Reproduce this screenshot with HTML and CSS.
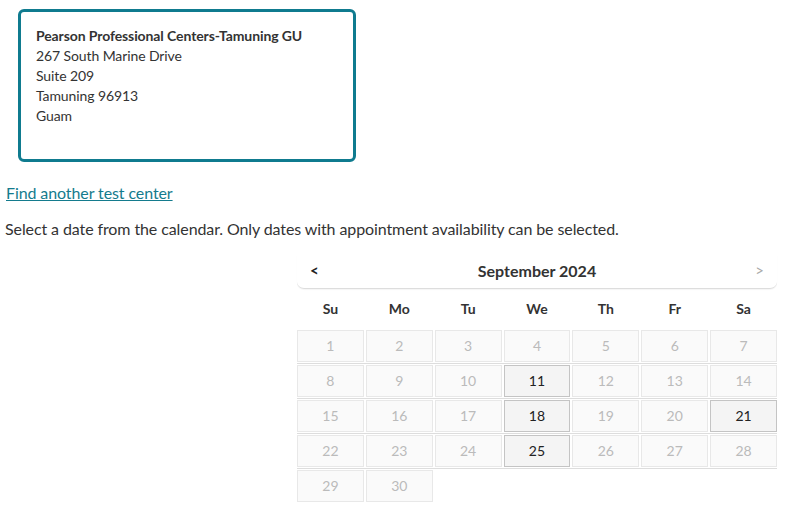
FILE: index.html
```html
<html>
    <head>
        <link rel="stylesheet" href="styles.css">
    </head>
    <body>
        <div class="center-card">
            <div class="center-name">Pearson Professional Centers-Tamuning GU</div>
            <div>267 South Marine Drive</div>
            <div>Suite 209</div>
            <div>Tamuning 96913</div>
            <div>Guam</div>
        </div>
        <a class="find-link" href="#">Find another test center</a>
        <p class="hint">Select a date from the calendar. Only dates with appointment availability can be selected.</p>
        <div class="calendar">
            <div class="cal-header">
                <span class="nav prev">&lt;</span>
                <span class="month">September 2024</span>
                <span class="nav next">&gt;</span>
            </div>
            <div class="weekdays">
                <div>Su</div><div>Mo</div><div>Tu</div><div>We</div><div>Th</div><div>Fr</div><div>Sa</div>
            </div>
            <div class="week">
                <div class="day">1</div><div class="day">2</div><div class="day">3</div><div class="day">4</div><div class="day">5</div><div class="day">6</div><div class="day">7</div>
            </div>
            <div class="week">
                <div class="day">8</div><div class="day">9</div><div class="day">10</div><div class="day open">11</div><div class="day">12</div><div class="day">13</div><div class="day">14</div>
            </div>
            <div class="week">
                <div class="day">15</div><div class="day">16</div><div class="day">17</div><div class="day open">18</div><div class="day">19</div><div class="day">20</div><div class="day open">21</div>
            </div>
            <div class="week">
                <div class="day">22</div><div class="day">23</div><div class="day">24</div><div class="day open">25</div><div class="day">26</div><div class="day">27</div><div class="day">28</div>
            </div>
            <div class="week last">
                <div class="day">29</div><div class="day">30</div>
            </div>
        </div>
    </body>
</html>
```

FILE: styles.css
```css
body{
    margin: 0;
    padding: 0 5px;
    font-family: Lato, "Open Sans", sans-serif;
    color: #333333;
    background-color: white;
    letter-spacing: -0.1px;
}
.center-card{
    margin: 9px 0 0 13px;
    width: 302px;
    padding: 14px 15px 33px 15px;
    border: 3px solid #0f7b8f;
    border-radius: 6px;
    font-size: 14px;
    line-height: 20px;
    color: #333333;
}
.center-name{
    font-weight: bold;
}
.find-link{
    display: inline-block;
    margin-top: 21px;
    margin-left: 1px;
    font-size: 16px;
    line-height: 20px;
    color: #147b8d;
}
.hint{
    margin: 16px 0 0 0;
    font-size: 16px;
    line-height: 20px;
}
.calendar{
    margin: 15px 0 0 292px;
    width: 480px;
    letter-spacing: 0;
}
.cal-header{
    display: flex;
    align-items: center;
    justify-content: space-between;
    height: 32px;
    padding: 0 13px 2px 13px;
    border-bottom: 1px solid #dddddd;
    border-radius: 0 0 7px 7px;
    box-shadow: 0 1px 1px rgba(0,0,0,0.04);
}
.month{
    font-size: 16px;
    font-weight: bold;
}
.nav{
    font-size: 15px;
    width: 10px;
}
.prev{
    font-weight: bold;
    color: #222222;
}
.next{
    color: #aaaaaa;
    text-align: right;
}
.weekdays{
    display: grid;
    grid-template-columns: repeat(7, 1fr);
    column-gap: 2px;
    height: 38px;
    padding-bottom: 2px;
    margin-bottom: 1px;
    align-items: center;
    text-align: center;
    font-size: 14px;
    font-weight: bold;
}
.week{
    display: grid;
    grid-template-columns: repeat(7, 1fr);
    column-gap: 2px;
    padding-bottom: 1px;
    margin-bottom: 1px;
    border-bottom: 1px solid #dddddd;
}
.week.last{
    border-bottom: none;
}
.day{
    height: 29px;
    padding-bottom: 1px;
    line-height: 29px;
    text-align: center;
    font-size: 14px;
    color: #bbbbbb;
    background-color: #fafafa;
    border: 1px solid #e8e8e8;
}
.day.open{
    color: #222222;
    background-color: #f4f4f4;
    border-color: #c4c4c4;
}
```
